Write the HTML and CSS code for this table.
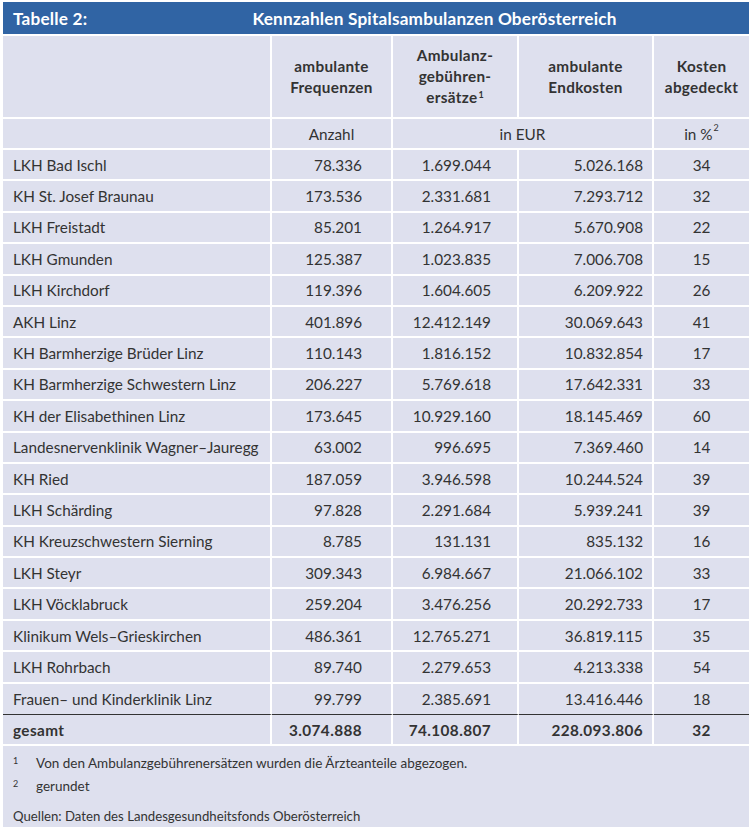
FILE: index.html
```html
<!DOCTYPE html>
<html lang="de">
<head>
<meta charset="utf-8">
<title>Tabelle 2</title>
<link rel="stylesheet" href="styles.css">
</head>
<body>
<div class="sheet">
  <div class="title">
    <span class="label">Tabelle 2:</span>
    <span class="heading">Kennzahlen Spitalsambulanzen Oberösterreich</span>
  </div>
  <table class="data">
    <colgroup>
      <col class="c1"><col class="c2"><col class="c3"><col class="c4"><col class="c5">
    </colgroup>
    <thead>
      <tr class="head">
        <th></th>
        <th>ambulante<br>Frequenzen</th>
        <th>Ambulanz-<br>gebühren-<br>ersätze<sup>1</sup></th>
        <th>ambulante<br>Endkosten</th>
        <th class="last">Kosten<br>abgedeckt</th>
      </tr>
      <tr class="unit">
        <td></td>
        <td>Anzahl</td>
        <td colspan="2">in EUR</td>
        <td class="last">in %<sup>2</sup></td>
      </tr>
    </thead>
    <tbody>
      <tr><td>LKH Bad Ischl</td><td>78.336</td><td>1.699.044</td><td>5.026.168</td><td class="last">34</td></tr>
      <tr><td>KH St. Josef Braunau</td><td>173.536</td><td>2.331.681</td><td>7.293.712</td><td class="last">32</td></tr>
      <tr><td>LKH Freistadt</td><td>85.201</td><td>1.264.917</td><td>5.670.908</td><td class="last">22</td></tr>
      <tr><td>LKH Gmunden</td><td>125.387</td><td>1.023.835</td><td>7.006.708</td><td class="last">15</td></tr>
      <tr><td>LKH Kirchdorf</td><td>119.396</td><td>1.604.605</td><td>6.209.922</td><td class="last">26</td></tr>
      <tr><td>AKH Linz</td><td>401.896</td><td>12.412.149</td><td>30.069.643</td><td class="last">41</td></tr>
      <tr><td>KH Barmherzige Brüder Linz</td><td>110.143</td><td>1.816.152</td><td>10.832.854</td><td class="last">17</td></tr>
      <tr><td>KH Barmherzige Schwestern Linz</td><td>206.227</td><td>5.769.618</td><td>17.642.331</td><td class="last">33</td></tr>
      <tr><td>KH der Elisabethinen Linz</td><td>173.645</td><td>10.929.160</td><td>18.145.469</td><td class="last">60</td></tr>
      <tr><td>Landesnervenklinik Wagner–Jauregg</td><td>63.002</td><td>996.695</td><td>7.369.460</td><td class="last">14</td></tr>
      <tr><td>KH Ried</td><td>187.059</td><td>3.946.598</td><td>10.244.524</td><td class="last">39</td></tr>
      <tr><td>LKH Schärding</td><td>97.828</td><td>2.291.684</td><td>5.939.241</td><td class="last">39</td></tr>
      <tr><td>KH Kreuzschwestern Sierning</td><td>8.785</td><td>131.131</td><td>835.132</td><td class="last">16</td></tr>
      <tr><td>LKH Steyr</td><td>309.343</td><td>6.984.667</td><td>21.066.102</td><td class="last">33</td></tr>
      <tr><td>LKH Vöcklabruck</td><td>259.204</td><td>3.476.256</td><td>20.292.733</td><td class="last">17</td></tr>
      <tr><td>Klinikum Wels–Grieskirchen</td><td>486.361</td><td>12.765.271</td><td>36.819.115</td><td class="last">35</td></tr>
      <tr><td>LKH Rohrbach</td><td>89.740</td><td>2.279.653</td><td>4.213.338</td><td class="last">54</td></tr>
      <tr class="lastrow"><td>Frauen– und Kinderklinik Linz</td><td>99.799</td><td>2.385.691</td><td>13.416.446</td><td class="last">18</td></tr>
    </tbody>
    <tfoot>
      <tr class="total"><td>gesamt</td><td>3.074.888</td><td>74.108.807</td><td>228.093.806</td><td class="last">32</td></tr>
    </tfoot>
  </table>
  <div class="notes">
    <p class="note"><span class="mark">1</span><span>Von den Ambulanzgebührenersätzen wurden die Ärzteanteile abgezogen.</span></p>
    <p class="note"><span class="mark">2</span><span>gerundet</span></p>
    <p class="source">Quellen: Daten des Landesgesundheitsfonds Oberösterreich</p>
  </div>
</div>
</body>
</html>
```

FILE: styles.css
```css
* { box-sizing: border-box; }
html, body { margin: 0; padding: 0; background: #ffffff; }
body {
  font-family: "Lato", "Noto Sans", sans-serif;
  color: #333333;
  padding: 2px 0 0 3px;
}
.sheet {
  width: 746px;
  height: 825px;
  background: #dee0ee;
}
.title {
  display: flex;
  align-items: center;
  background: #3064a4;
  color: #ffffff;
  font-weight: 700;
  font-size: 17.2px;
  letter-spacing: 0.2px;
  border-bottom: 2px solid #ffffff;
  height: 34px;
}
.title .label {
  width: 117px;
  padding-left: 10px;
}
.title .heading {
  flex: 1;
  text-align: center;
}
.data {
  width: 746px;
  table-layout: fixed;
  border-collapse: separate;
  border-spacing: 0;
  font-size: 15.3px;
}
.c1 { width: 269px; }
.c2 { width: 121px; }
.c3 { width: 126px; }
.c4 { width: 135px; }
.c5 { width: 95px; }
.data th, .data td {
  border-right: 2px solid #ffffff;
  border-bottom: 2px solid #ffffff;
  padding: 0;
  vertical-align: middle;
}
.data .last { border-right: none; text-align: center; }
.head th {
  height: 83px;
  font-weight: 700;
  letter-spacing: 0.3px;
  text-align: center;
  line-height: 21px;
}
sup {
  font-size: 9px;
  vertical-align: top;
  position: relative;
  top: -3px;
  margin-left: 1px;
  letter-spacing: 0;
}
.unit td {
  height: 31px;
  text-align: center;
}
tbody td {
  height: 31.4px;
  text-align: right;
}
tbody td:first-child, tfoot td:first-child {
  text-align: left;
  padding-left: 10px;
}
tbody td:nth-child(2), tfoot td:nth-child(2) { padding-right: 29px; text-align: right; }
tbody td:nth-child(3), tfoot td:nth-child(3) { padding-right: 26px; text-align: right; }
tbody td:nth-child(4), tfoot td:nth-child(4) { padding-right: 9px; text-align: right; }
tbody .lastrow td { border-bottom: 1.5px solid #333333; }
tfoot td {
  height: 31px;
  font-weight: 700;
  letter-spacing: 0.4px;
}
.notes {
  padding: 6px 0 0 10px;
  font-size: 13.5px;
}
.note {
  display: flex;
  margin: 0;
  line-height: 23px;
}
.mark {
  width: 23px;
  font-size: 9px;
  line-height: 17px;
}
.source {
  margin: 7px 0 0;
  line-height: 23px;
  font-size: 13.2px;
}
```
